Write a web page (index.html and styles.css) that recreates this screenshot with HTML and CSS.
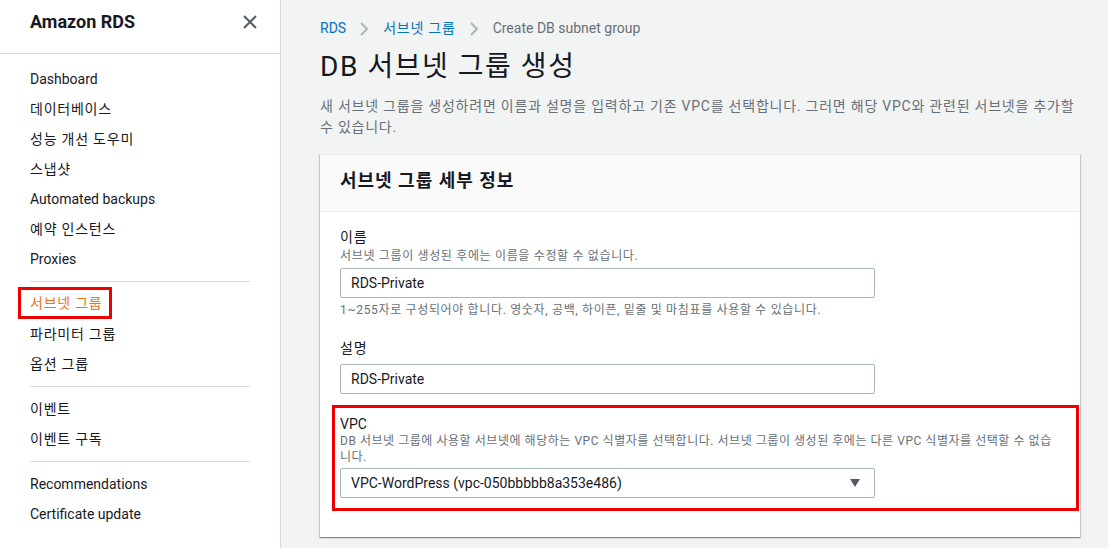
FILE: index.html
```html
<!DOCTYPE html>
<html lang="ko">
<head>
<meta charset="utf-8">
<title>DB 서브넷 그룹 생성</title>
<link rel="stylesheet" href="styles.css">
</head>
<body>
<div class="app">
  <aside class="sidebar">
    <div class="side-head">
      <span class="side-title">Amazon RDS</span>
      <svg class="close-icon" width="14" height="14" viewBox="0 0 14 14" aria-hidden="true"><path d="M1 1 L13 13 M13 1 L1 13" stroke="#545b64" stroke-width="2" fill="none"/></svg>
    </div>
    <nav class="side-nav">
      <ul class="nav-group">
        <li><a class="nav-link">Dashboard</a></li>
        <li><a class="nav-link ko">데이터베이스</a></li>
        <li><a class="nav-link ko">성능 개선 도우미</a></li>
        <li><a class="nav-link ko">스냅샷</a></li>
        <li><a class="nav-link">Automated backups</a></li>
        <li><a class="nav-link ko">예약 인스턴스</a></li>
        <li><a class="nav-link">Proxies</a></li>
      </ul>
      <hr class="nav-divider">
      <ul class="nav-group">
        <li><a class="nav-link ko is-active"><span class="callout">서브넷 그룹</span></a></li>
        <li><a class="nav-link ko">파라미터 그룹</a></li>
        <li><a class="nav-link ko">옵션 그룹</a></li>
      </ul>
      <hr class="nav-divider">
      <ul class="nav-group">
        <li><a class="nav-link ko">이벤트</a></li>
        <li><a class="nav-link ko">이벤트 구독</a></li>
      </ul>
      <hr class="nav-divider">
      <ul class="nav-group">
        <li><a class="nav-link">Recommendations</a></li>
        <li><a class="nav-link">Certificate update</a></li>
      </ul>
    </nav>
  </aside>
  <main class="main">
    <nav class="crumbs">
      <a class="crumb-link">RDS</a>
      <svg class="crumb-sep" width="8" height="14" viewBox="0 0 8 14" aria-hidden="true"><path d="M1 1 L7 7 L1 13" stroke="#aab7b8" stroke-width="2" fill="none"/></svg>
      <a class="crumb-link ko">서브넷 그룹</a>
      <svg class="crumb-sep" width="8" height="14" viewBox="0 0 8 14" aria-hidden="true"><path d="M1 1 L7 7 L1 13" stroke="#aab7b8" stroke-width="2" fill="none"/></svg>
      <span class="crumb-current">Create DB subnet group</span>
    </nav>
    <h1 class="page-title ko">DB 서브넷 그룹 생성</h1>
    <p class="page-desc ko">새 서브넷 그룹을 생성하려면 이름과 설명을 입력하고 기존 VPC를 선택합니다. 그러면 해당 VPC와 관련된 서브넷을 추가할 수 있습니다.</p>
    <section class="card">
      <header class="card-head"><h2 class="card-title ko">서브넷 그룹 세부 정보</h2></header>
      <div class="card-body">
        <div class="field">
          <div class="field-label ko">이름</div>
          <div class="field-desc ko">서브넷 그룹이 생성된 후에는 이름을 수정할 수 없습니다.</div>
          <div class="text-input">RDS-Private</div>
          <div class="field-hint ko">1~255자로 구성되어야 합니다. 영숫자, 공백, 하이픈, 밑줄 및 마침표를 사용할 수 있습니다.</div>
        </div>
        <div class="field">
          <div class="field-label ko">설명</div>
          <div class="text-input">RDS-Private</div>
        </div>
        <div class="field field-callout">
          <div class="field-label">VPC</div>
          <div class="field-desc ko">DB 서브넷 그룹에 사용할 서브넷에 해당하는 VPC 식별자를 선택합니다. 서브넷 그룹이 생성된 후에는 다른 VPC 식별자를 선택할 수 없습니다.</div>
          <div class="select-input">
            <span>VPC-WordPress (vpc-050bbbbb8a353e486)</span>
            <svg width="10" height="8" viewBox="0 0 10 8" aria-hidden="true"><path d="M0 0 H10 L5 8 Z" fill="#545b64"/></svg>
          </div>
        </div>
      </div>
    </section>
  </main>
</div>
</body>
</html>
```
FILE: styles.css
```css
* { box-sizing: border-box; }
html, body { margin: 0; padding: 0; }
body {
  font-family: Roboto, "Noto Sans CJK KR", sans-serif;
  font-size: 14px;
  color: #16191f;
  background: #f2f3f3;
  overflow: hidden;
}
.ko { letter-spacing: 0.055em; }
.app {
  display: flex;
  height: 548px;
}
.sidebar {
  width: 281px;
  flex: 0 0 281px;
  background: #ffffff;
  border-right: 1px solid #d5dbdb;
}
.side-head {
  height: 54px;
  display: flex;
  justify-content: space-between;
  align-items: flex-start;
  padding: 10px 23px 0 30px;
  border-bottom: 1px solid #d5dbdb;
}
.side-title {
  font-size: 18px;
  font-weight: 700;
  line-height: 24px;
  color: #16191f;
}
.close-icon { margin-top: 5px; }
.side-nav { padding-top: 10px; }
.nav-group { list-style: none; margin: 0; padding: 0; }
.nav-link {
  display: flex;
  align-items: center;
  height: 30px;
  padding: 0 30px;
  color: #16191f;
  text-decoration: none;
}
.nav-link.ko { padding-bottom: 2px; }
.nav-link.is-active { color: #ec7211; }
.callout {
  border: 3px solid #ee0000;
  padding: 3px 6px 2px 9px;
  line-height: 21px;
  margin: 0 -9px 0 -12px;
}
.nav-divider {
  border: 0;
  border-top: 1px solid #d5dbdb;
  margin: 7px 30px;
  height: 0;
}
.main {
  flex: 1;
  padding: 18px 28px 0 39px;
}
.crumbs {
  display: flex;
  align-items: center;
  height: 21px;
  line-height: 21px;
}
.crumb-link { color: #0073bb; text-decoration: none; }
.crumb-sep { margin: 0 15px 0 14px; }
.crumb-current { color: #687078; }
.page-title {
  margin: 10px 0 0;
  font-size: 28px;
  font-weight: 400;
  line-height: 36px;
  color: #16191f;
}
.page-desc {
  margin: 11px 0 0;
  line-height: 21px;
  color: #687078;
}
.card {
  margin-top: 16px;
  background: #ffffff;
  border-top: 1px solid #eaeded;
  box-shadow: 0 1px 1px 0 rgba(0, 28, 36, 0.3), 1px 1px 1px 0 rgba(0, 28, 36, 0.15), -1px 1px 1px 0 rgba(0, 28, 36, 0.15);
}
.card-head {
  background: #fafafa;
  padding: 14px 20px 18px;
  border-bottom: 1px solid #eaeded;
}
.card-title {
  margin: 0;
  font-size: 18px;
  font-weight: 700;
  line-height: 24px;
}
.card-body {
  padding: 15px 20px 26px;
}
.field + .field { margin-top: 20px; }
.field-label { line-height: 21px; }
.field-desc, .field-hint {
  font-size: 12px;
  line-height: 16px;
  color: #687078;
}
.field-hint { margin-top: 4px; }
.text-input, .select-input {
  width: 535px;
  height: 30px;
  margin-top: 4px;
  border: 1px solid #aab7b8;
  border-radius: 2px;
  padding: 0 10px;
  display: flex;
  align-items: center;
  background: #ffffff;
  color: #16191f;
}
.field-label + .text-input { margin-top: 5px; }
.select-input {
  justify-content: space-between;
  padding-right: 14px;
}
.field-callout {
  border: 3px solid #ee0000;
  margin: 0 -19px 0 -8px;
  padding: 6px 16px 10px 5px;
}
.field-callout .field-desc { margin-top: -2px; letter-spacing: 0.045em; }
.field-callout .select-input { margin-top: 3px; }
.field + .field-callout { margin-top: 11px; }
```
